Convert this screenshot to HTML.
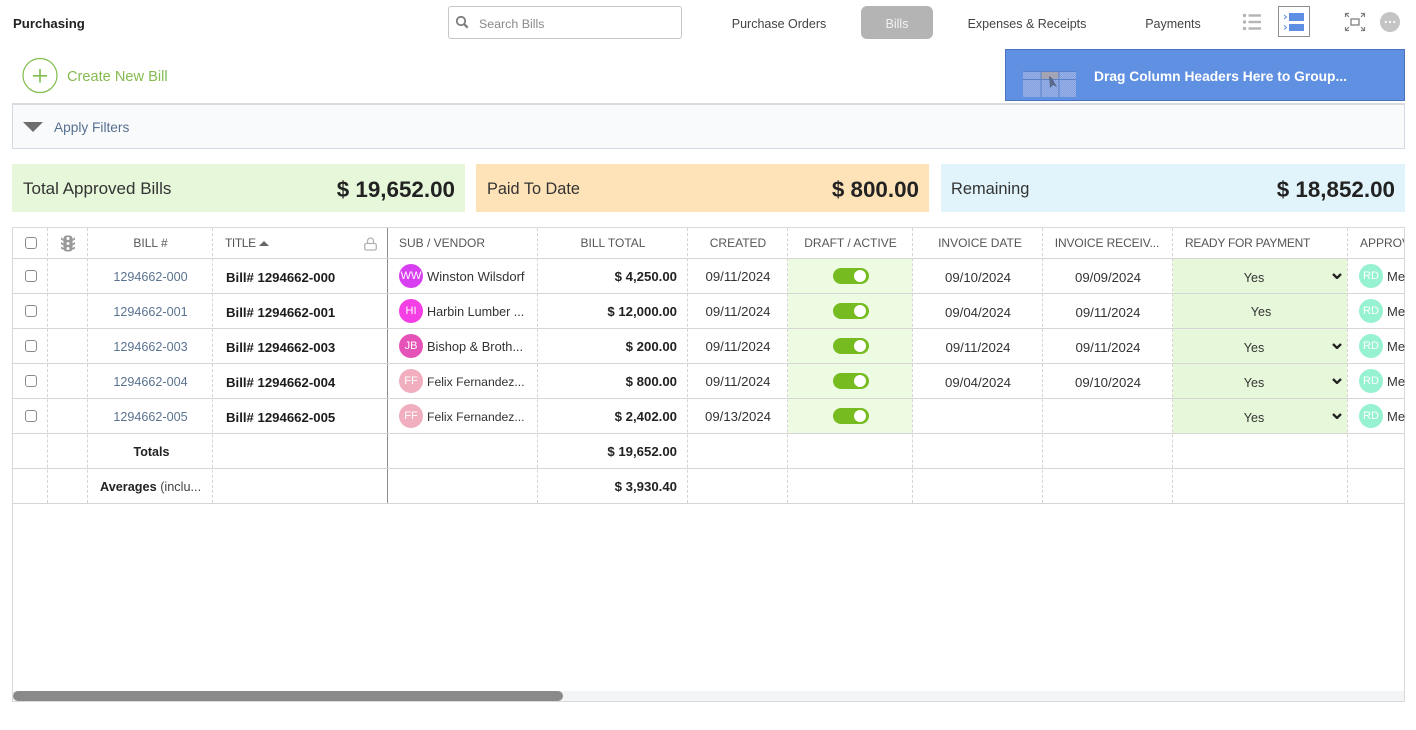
<!DOCTYPE html>
<html><head><meta charset="utf-8"><title>Purchasing</title>
<style>
html,body{margin:0;padding:0;width:1416px;height:730px;overflow:hidden;background:#fff;font-family:"Liberation Sans",sans-serif;color:#222;font-size:13px}
.a{position:absolute;white-space:nowrap}
.nav{top:17px;height:15px;line-height:15px;font-size:12.5px;color:#444;text-align:center}
.card{top:164px;height:48px}
.card .l{position:absolute;left:11px;top:15px;font-size:17px;line-height:20px;color:#333}
.card .v{position:absolute;right:10px;top:12px;font-size:22.4px;line-height:28px;font-weight:bold;color:#222}
.v-line{position:absolute;top:228px;height:275px;width:0;border-left:1px dashed #d4d4d4}
.h-line{position:absolute;left:13px;width:1391px;height:1px;background:#d6d6d6}
.hd{position:absolute;top:236px;font-size:12px;line-height:15px;color:#555;white-space:nowrap}
.ctr{text-align:center}
.t{position:absolute;line-height:16px;white-space:nowrap;font-size:12.5px}
.cb{position:absolute;left:25px;width:10px;height:10px;border:1px solid #8a8a8a;border-radius:3px;background:#fff}
.num{left:88px;width:125px;text-align:center;color:#5a7390;font-size:12.6px}
.title{left:226px;font-weight:bold;color:#1c1c1c;font-size:13.2px}
.av{position:absolute;left:399px;width:24px;height:24px;border-radius:50%;color:#fff;font-size:11px;line-height:24px;text-align:center}
.ven{left:427px;color:#333}
.tot{left:538px;width:139px;text-align:right;font-weight:bold;color:#222;font-size:13.2px}
.dt{width:100px;text-align:center;color:#333;font-size:13.2px}
.tg{position:absolute;left:833px;width:36px;height:16px;border-radius:8px;background:#76bc21}
.tg i{position:absolute;right:3px;top:2px;width:12px;height:12px;border-radius:50%;background:#fff}
.yes{width:60px;text-align:center;color:#333}
.rd{left:1359px;background:#97f2d2}
.me{left:1387px;color:#333;font-size:13px}
.chev{position:absolute;left:1332px;width:10px;height:6px}
</style></head><body>

<div class="a" style="left:13px;top:16px;font-size:13.2px;line-height:16px;font-weight:bold;color:#222">Purchasing</div>

<div class="a" style="left:448px;top:6px;width:232px;height:31px;border:1px solid #c6c6c6;border-radius:3px"></div>
<svg class="a" style="left:455px;top:15px" width="14" height="14" viewBox="0 0 14 14"><circle cx="6" cy="6" r="4.200" fill="none" stroke="#7d7d7d" stroke-width="1.800"/><path d="M9.200 9.200l3.500 3.500" stroke="#7d7d7d" stroke-width="2.200"/></svg>
<div class="a" style="left:479px;top:17px;font-size:12.4px;line-height:15px;color:#8a8a8a">Search Bills</div>

<div class="a nav" style="left:719px;width:120px">Purchase Orders</div>
<div class="a" style="left:861px;top:6px;width:72px;height:33px;background:#b4b4b4;border-radius:6px"></div>
<div class="a nav" style="left:861px;width:72px;color:#f2f2f2">Bills</div>
<div class="a nav" style="left:957px;width:140px">Expenses &amp; Receipts</div>
<div class="a nav" style="left:1133px;width:80px">Payments</div>

<svg class="a" style="left:1242px;top:12px" width="20" height="20" viewBox="0 0 20 20"><g fill="#b4b4b4"><circle cx="2.500" cy="3.500" r="1.700"/><circle cx="2.500" cy="10" r="1.700"/><circle cx="2.500" cy="16.500" r="1.700"/><rect x="6.500" y="2.300" width="12.500" height="2.400"/><rect x="6.500" y="8.800" width="12.500" height="2.400"/><rect x="6.500" y="15.300" width="12.500" height="2.400"/></g></svg>
<div class="a" style="left:1278px;top:6px;width:30px;height:29px;border:1px solid #8f8f8f"></div>
<svg class="a" style="left:1283px;top:12px" width="22" height="20" viewBox="0 0 22 20"><g fill="#5f8fe2"><rect x="6" y="1" width="15" height="8"/><rect x="6" y="12" width="15" height="7"/></g><path d="M1 3l2.500 2-2.500 2M1 13.500l2.500 2-2.500 2" fill="none" stroke="#5f8fe2" stroke-width="1"/></svg>
<svg class="a" style="left:1344px;top:12px" width="22" height="20" viewBox="0 0 22 20"><rect x="7" y="7" width="8" height="6" fill="none" stroke="#808080" stroke-width="1.300"/><g fill="none" stroke="#808080" stroke-width="1.200"><path d="M1.500 5V1.500H5M1.500 1.500l3.500 3.500"/><path d="M20.500 5V1.500H17M20.500 1.500L17 5"/><path d="M1.500 15v3.500H5M1.500 18.500L5 15"/><path d="M20.500 15v3.500H17M20.500 18.500L17 15"/></g></svg>
<svg class="a" style="left:1380px;top:12px" width="20" height="20" viewBox="0 0 20 20"><circle cx="10" cy="10" r="10" fill="#c4c4c4"/><g fill="#fff"><circle cx="5.800" cy="10" r="1.100"/><circle cx="10" cy="10" r="1.100"/><circle cx="14.200" cy="10" r="1.100"/></g></svg>

<svg class="a" style="left:22px;top:58px" width="36" height="36" viewBox="0 0 36 36"><circle cx="18" cy="17.500" r="17" fill="none" stroke="#80bc4a" stroke-width="1.200"/><path d="M18 11v13.500M11 17.800h14" stroke="#80bc4a" stroke-width="1.600"/></svg>
<div class="a" style="left:67px;top:68px;font-size:14.600px;line-height:18px;color:#85bb50">Create New Bill</div>

<div class="a" style="left:1005px;top:49px;width:398px;height:50px;background:#6090e2;border:1px solid #4a73bd"></div>
<svg class="a" style="left:1023px;top:71px" width="54" height="27" viewBox="0 0 54 27"><defs><pattern id="st" width="2" height="2" patternUnits="userSpaceOnUse"><rect width="2" height="2" fill="#7f9fe2"/><rect width="1" height="1" fill="#9db3e6"/><rect x="1" y="1" width="1" height="1" fill="#9db3e6"/></pattern></defs><rect x="0" y="0" width="53" height="26" fill="url(#st)"/><rect x="18" y="1" width="18" height="7" fill="#a3a5b4"/><path d="M0 .5h53M0 8.500h53M18 0v26M36 0v26" stroke="#5a80c8" stroke-width="1" fill="none"/><path d="M26 5l1 12 3-3 4 2-5-9z" fill="#5a6a8a"/></svg>
<div class="a" style="left:1094px;top:69px;font-size:13.800px;line-height:16px;font-weight:bold;color:#fff">Drag Column Headers Here to Group...</div>

<div class="a" style="left:12px;top:103px;width:1391px;height:43px;background:#f9fafc;border:1px solid #d5dae2;border-top:2px solid #d8dbe0"></div>
<div class="a" style="left:23px;top:122px;width:0;height:0;border-left:10px solid transparent;border-right:10px solid transparent;border-top:10px solid #6e6e6e"></div>
<div class="a" style="left:54px;top:120px;font-size:13.700px;line-height:15px;color:#56708f">Apply Filters</div>

<div class="a card" style="left:12px;width:453px;background:#e6f7da"><div class="l">Total Approved Bills</div><div class="v">$ 19,652.00</div></div>
<div class="a card" style="left:476px;width:453px;background:#fee3b9"><div class="l" style="font-size:16.300px">Paid To Date</div><div class="v">$ 800.00</div></div>
<div class="a card" style="left:941px;width:464px;background:#e2f4fb"><div class="l" style="left:10px;font-size:16.400px">Remaining</div><div class="v">$ 18,852.00</div></div>

<!-- grid frame -->
<div class="a" style="left:12px;top:227px;width:1391px;height:473px;border:1px solid #d9d9d9"></div>

<!-- green columns -->
<div class="a" style="left:788px;top:259px;width:124px;height:174px;background:#edfbe3"></div>
<div class="a" style="left:1173px;top:259px;width:174px;height:174px;background:#e7f7da"></div>

<!-- vertical lines -->
<div class="v-line" style="left:47px"></div>
<div class="v-line" style="left:87px"></div>
<div class="v-line" style="left:212px"></div>
<div class="a" style="left:387px;top:228px;width:1px;height:275px;background:#8c8c8c"></div>
<div class="v-line" style="left:537px"></div>
<div class="v-line" style="left:687px"></div>
<div class="v-line" style="left:787px"></div>
<div class="v-line" style="left:912px"></div>
<div class="v-line" style="left:1042px"></div>
<div class="v-line" style="left:1172px"></div>
<div class="v-line" style="left:1347px"></div>

<!-- horizontal lines -->
<div class="h-line" style="top:258px"></div>
<div class="h-line" style="top:293px"></div>
<div class="h-line" style="top:328px"></div>
<div class="h-line" style="top:363px"></div>
<div class="h-line" style="top:398px"></div>
<div class="h-line" style="top:433px"></div>
<div class="h-line" style="top:468px"></div>
<div class="h-line" style="top:503px"></div>

<!-- header -->
<div class="cb" style="top:237px"></div>
<svg class="a" style="left:60px;top:235px" width="16" height="17" viewBox="0 0 16 17"><rect x="3.500" y="0.500" width="9" height="16" rx="3" fill="#999"/><path d="M1 2.500l2.500 1.500v2L1 4.500zM15 2.500L12.500 4v2L15 4.500zM1 7l2.500 1.500v2L1 9zM15 7l-2.500 1.500v2L15 9zM1 11.500L3.500 13v2L1 13.500zM15 11.500L12.500 13v2l2.500-1.500z" fill="#999"/><g fill="#fff"><circle cx="8" cy="3.500" r="1.500"/><circle cx="8" cy="8.500" r="1.500"/><circle cx="8" cy="13.500" r="1.500"/></g></svg>
<div class="hd ctr" style="left:88px;width:125px">BILL #</div>
<div class="hd" style="left:225px;letter-spacing:-.4px">TITLE</div>
<div class="a" style="left:259px;top:241px;width:0;height:0;border-left:5px solid transparent;border-right:5px solid transparent;border-bottom:5px solid #666"></div>
<svg class="a" style="left:364px;top:237px" width="13" height="14" viewBox="0 0 13 14"><path d="M3.500 6.500V4a3 3 0 0 1 6 0v2.500" fill="none" stroke="#b3b3b3" stroke-width="1.300"/><rect x=".7" y="6.500" width="11.600" height="6.500" rx="1.500" fill="none" stroke="#b3b3b3" stroke-width="1.300"/></svg>
<div class="hd" style="left:399px">SUB / VENDOR</div>
<div class="hd ctr" style="left:538px;width:150px">BILL TOTAL</div>
<div class="hd ctr" style="left:688px;width:100px">CREATED</div>
<div class="hd ctr" style="left:788px;width:125px">DRAFT / ACTIVE</div>
<div class="hd ctr" style="left:915px;width:130px">INVOICE DATE</div>
<div class="hd ctr" style="left:1042px;width:130px;letter-spacing:-.1px">INVOICE RECEIV...</div>
<div class="hd" style="left:1185px;letter-spacing:-.25px">READY FOR PAYMENT</div>
<div class="a" style="left:1360px;top:236px;width:44px;overflow:hidden;font-size:12px;line-height:15px;color:#555">APPROVER</div>

<!-- row 1 -->
<div class="cb" style="top:270px"></div>
<div class="t num" style="top:269px">1294662-000</div>
<div class="t title" style="top:270px">Bill# 1294662-000</div>
<div class="av" style="top:264px;background:#d83ff0">WW</div>
<div class="t ven" style="top:269px;font-size:13px">Winston Wilsdorf</div>
<div class="t tot" style="top:269px">$ 4,250.00</div>
<div class="t dt" style="left:688px;top:269px">09/11/2024</div>
<div class="tg" style="top:268px"><i></i></div>
<div class="t dt" style="left:928px;top:270px">09/10/2024</div>
<div class="t dt" style="left:1058px;top:270px">09/09/2024</div>
<div class="t yes" style="left:1224px;top:270px">Yes</div>
<svg class="chev" style="top:273px" viewBox="0 0 10 6"><path d="M1 1l4 4 4-4" fill="none" stroke="#222" stroke-width="2.300"/></svg>
<div class="av rd" style="top:264px">RD</div>
<div class="t me" style="top:269px">Me</div>

<!-- row 2 -->
<div class="cb" style="top:305px"></div>
<div class="t num" style="top:304px">1294662-001</div>
<div class="t title" style="top:305px">Bill# 1294662-001</div>
<div class="av" style="top:299px;background:#f33fe3">HI</div>
<div class="t ven" style="top:304px;font-size:12.600px">Harbin Lumber ...</div>
<div class="t tot" style="top:304px">$ 12,000.00</div>
<div class="t dt" style="left:688px;top:304px">09/11/2024</div>
<div class="tg" style="top:303px"><i></i></div>
<div class="t dt" style="left:928px;top:305px">09/04/2024</div>
<div class="t dt" style="left:1058px;top:305px">09/11/2024</div>
<div class="t yes" style="left:1231px;top:304px">Yes</div>
<div class="av rd" style="top:299px">RD</div>
<div class="t me" style="top:304px">Me</div>

<!-- row 3 -->
<div class="cb" style="top:340px"></div>
<div class="t num" style="top:339px">1294662-003</div>
<div class="t title" style="top:340px">Bill# 1294662-003</div>
<div class="av" style="top:334px;background:#e653b8">JB</div>
<div class="t ven" style="top:339px;font-size:12.800px">Bishop &amp; Broth...</div>
<div class="t tot" style="top:339px">$ 200.00</div>
<div class="t dt" style="left:688px;top:339px">09/11/2024</div>
<div class="tg" style="top:338px"><i></i></div>
<div class="t dt" style="left:928px;top:340px">09/11/2024</div>
<div class="t dt" style="left:1058px;top:340px">09/11/2024</div>
<div class="t yes" style="left:1224px;top:340px">Yes</div>
<svg class="chev" style="top:343px" viewBox="0 0 10 6"><path d="M1 1l4 4 4-4" fill="none" stroke="#222" stroke-width="2.300"/></svg>
<div class="av rd" style="top:334px">RD</div>
<div class="t me" style="top:339px">Me</div>

<!-- row 4 -->
<div class="cb" style="top:375px"></div>
<div class="t num" style="top:374px">1294662-004</div>
<div class="t title" style="top:375px">Bill# 1294662-004</div>
<div class="av" style="top:369px;background:#f0aebf">FF</div>
<div class="t ven" style="top:374px;font-size:12.200px">Felix Fernandez...</div>
<div class="t tot" style="top:374px">$ 800.00</div>
<div class="t dt" style="left:688px;top:374px">09/11/2024</div>
<div class="tg" style="top:373px"><i></i></div>
<div class="t dt" style="left:928px;top:375px">09/04/2024</div>
<div class="t dt" style="left:1058px;top:375px">09/10/2024</div>
<div class="t yes" style="left:1224px;top:375px">Yes</div>
<svg class="chev" style="top:378px" viewBox="0 0 10 6"><path d="M1 1l4 4 4-4" fill="none" stroke="#222" stroke-width="2.300"/></svg>
<div class="av rd" style="top:369px">RD</div>
<div class="t me" style="top:374px">Me</div>

<!-- row 5 -->
<div class="cb" style="top:410px"></div>
<div class="t num" style="top:409px">1294662-005</div>
<div class="t title" style="top:410px">Bill# 1294662-005</div>
<div class="av" style="top:404px;background:#f0aebf">FF</div>
<div class="t ven" style="top:409px;font-size:12.200px">Felix Fernandez...</div>
<div class="t tot" style="top:409px">$ 2,402.00</div>
<div class="t dt" style="left:688px;top:409px">09/13/2024</div>
<div class="tg" style="top:408px"><i></i></div>
<div class="t yes" style="left:1224px;top:410px">Yes</div>
<svg class="chev" style="top:413px" viewBox="0 0 10 6"><path d="M1 1l4 4 4-4" fill="none" stroke="#222" stroke-width="2.300"/></svg>
<div class="av rd" style="top:404px">RD</div>
<div class="t me" style="top:409px">Me</div>

<!-- totals -->
<div class="t" style="left:89px;width:125px;top:444px;text-align:center;font-weight:bold">Totals</div>
<div class="t tot" style="top:444px">$ 19,652.00</div>
<div class="t" style="left:100px;top:479px;font-size:12.700px"><b>Averages</b> <span style="color:#444">(inclu...</span></div>
<div class="t tot" style="top:479px">$ 3,930.40</div>

<!-- scrollbar -->
<div class="a" style="left:13px;top:691px;width:1391px;height:10px;background:#f3f4f6"></div>
<div class="a" style="left:13px;top:691px;width:550px;height:10px;background:#8b8a8a;border-radius:5px"></div>

</body></html>
